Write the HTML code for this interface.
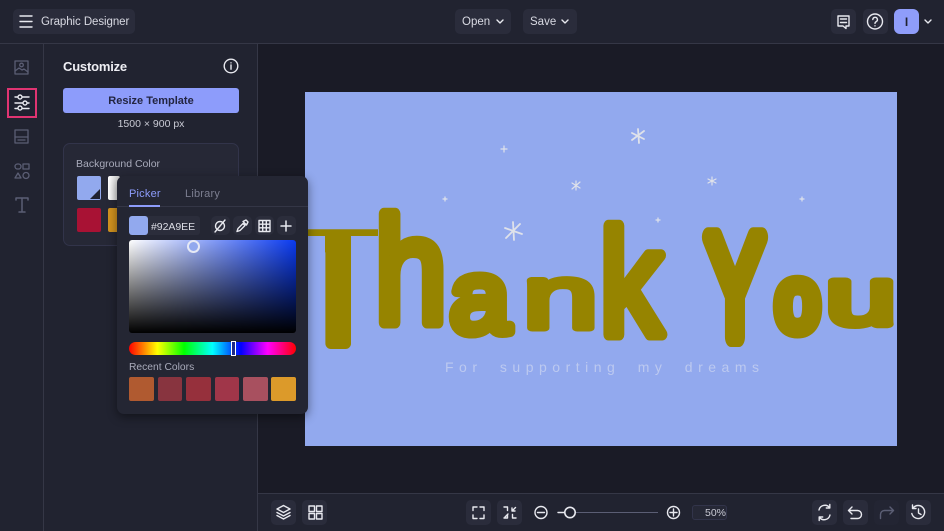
<!DOCTYPE html>
<html><head><meta charset="utf-8"><style>
html,body{margin:0;padding:0;width:944px;height:531px;overflow:hidden;background:#1a1b26;font-family:"Liberation Sans",sans-serif}
.a{position:absolute}
.btn{position:absolute;background:#2a2c3b;border-radius:5px}
.t{position:absolute;white-space:nowrap}
svg{position:absolute;overflow:visible}
.i{fill:none;stroke:#e8e9ef;stroke-width:1.4;stroke-linecap:round;stroke-linejoin:round}
.d{fill:none;stroke:#5b5e74;stroke-width:1.3;stroke-linecap:round;stroke-linejoin:round}
</style></head><body>
<div class="a" style="left:0;top:0;width:944px;height:43px;background:#212330;border-bottom:1px solid #353746"></div>
<div class="a" style="left:0;top:44px;width:43px;height:487px;background:#212330;border-right:1px solid #353746"></div>
<div class="a" style="left:44px;top:44px;width:213px;height:487px;background:#212330;border-right:1px solid #353746"></div>
<div class="a" style="left:258px;top:493px;width:686px;height:38px;background:#212330;border-top:1px solid #353746;box-sizing:border-box"></div>

<div class="btn" style="left:13px;top:9px;width:122px;height:25px"></div>
<svg style="left:0;top:0" width="40" height="44" class="i"><path d="M20 16h12M20 21.500h12M20 27h12"/></svg>
<div class="t" style="left:41px;top:16px;font-size:11.500px;color:#d8d9e2;letter-spacing:-.08px">Graphic Designer</div>

<div class="btn" style="left:455px;top:9px;width:56px;height:25px"></div>
<div class="t" style="left:462px;top:16px;font-size:11.500px;color:#d8d9e2">Open</div>
<div class="btn" style="left:523px;top:9px;width:54px;height:25px"></div>
<svg style="left:0;top:0" width="600" height="44" class="i"><path d="M497 20l3 3 3-3M562 20l3 3 3-3"/></svg>
<div class="t" style="left:530px;top:16px;font-size:11.500px;color:#d8d9e2">Save</div>

<div class="btn" style="left:831px;top:9px;width:25px;height:25px"></div>
<div class="btn" style="left:863px;top:9px;width:25px;height:25px"></div>
<div class="a" style="left:894px;top:9px;width:25px;height:25px;background:#8f9dfa;border-radius:6px"></div>
<div class="t" style="left:903px;top:15px;font-size:12px;font-weight:bold;color:#1f2130;width:7px;text-align:center">I</div>
<svg style="left:0;top:0" width="944" height="44" class="i">
<path d="M838 16h11v10h-3v2.500l-3-2.500h-5zM840.500 19h6M840.500 22.500h6"/>
<circle cx="875" cy="21.500" r="7.500"/><path d="M872.800 19.500a2.300 2.300 0 1 1 3.300 2.200c-.8.400-1.100.9-1.100 1.700"/><path d="M875 25.800v.1"/>
<path d="M925 20l3 3 3-3"/>
</svg>

<svg style="left:0;top:44px" width="44" height="180" class="d">
<rect x="15" y="17" width="13" height="13"/><circle cx="21.500" cy="21" r="1.800"/><path d="M15 27l4-3 3 2 2-1 4 3"/>
<rect x="15" y="86" width="13" height="13"/><path d="M15 93h13M18 96h7"/>
<rect x="15" y="120" width="6" height="5" rx="2.500"/><rect x="23" y="120" width="6" height="5"/><path d="M18 129l3 5h-6z"/><circle cx="26" cy="131.500" r="3"/>
<path d="M16 156v-2h12v2M22 154v14M19 168h6" stroke-width="1.500"/>
</svg>
<div class="a" style="left:7px;top:88px;width:30px;height:30px;border:2px solid #e03472;box-sizing:border-box;background:#1f2130"></div>
<svg style="left:0;top:0" width="44" height="120" class="i">
<path d="M15 97h14M15 103h14M15 108.500h14"/>
<circle cx="20" cy="97" r="2" fill="#1f2130"/><circle cx="25" cy="103" r="2" fill="#1f2130"/><circle cx="20" cy="108" r="2" fill="#1f2130"/>
</svg>

<div class="t" style="left:63px;top:59px;font-size:13px;font-weight:bold;color:#eeeef3;letter-spacing:-.2px">Customize</div>
<svg style="left:0;top:0" width="260" height="90" class="i"><circle cx="231" cy="66" r="6.800"/><path d="M231 65v4.200M231 62.800v.1"/></svg>
<div class="a" style="left:63px;top:88px;width:176px;height:25px;background:#8d9cfb;border-radius:3px"></div>
<div class="t" style="left:63px;top:95px;width:176px;text-align:center;font-size:11px;font-weight:bold;color:#232541">Resize Template</div>
<div class="t" style="left:63px;top:117.500px;width:176px;text-align:center;font-size:10.500px;color:#c9cad4">1500 × 900 px</div>

<div class="a" style="left:63px;top:143px;width:176px;height:103px;background:#262836;border:1px solid #32344a;border-radius:7px;box-sizing:border-box"></div>
<div class="t" style="left:76px;top:157.500px;font-size:10.500px;color:#a9abbb">Background Color</div>
<div class="a" style="left:77px;top:176px;width:24px;height:24px;background:#92a9ee;border-radius:2px"></div>
<svg style="left:0;top:0" width="110" height="210"><path d="M100 189v10h-10z" fill="#1f2130"/></svg>
<div class="a" style="left:108px;top:176px;width:12px;height:24px;background:linear-gradient(90deg,#fff,#ccc);border-radius:2px"></div>
<div class="a" style="left:77px;top:208px;width:24px;height:24px;background:#a81234;border-radius:2px"></div>
<div class="a" style="left:108px;top:208px;width:12px;height:24px;background:#d0921f;border-radius:2px"></div>

<!-- canvas -->
<div class="a" style="left:305px;top:92px;width:592px;height:354px;background:#92a9ee;overflow:hidden"></div>
<svg style="left:0;top:0" width="944" height="531">
<defs>
<clipPath id="c"><rect x="305" y="92" width="592" height="354"/></clipPath>
<clipPath id="tc"><rect x="305" y="220" width="73" height="16"/><rect x="325" y="236" width="26" height="120"/></clipPath>
</defs>
<g stroke="#dfe2ea" stroke-linecap="round" fill="none">
<g stroke-width="1.800"><path d="M638 129l1 14M632 133l12 6M644 131l-12 9"/></g>
<g stroke-width="1.800"><path d="M513 222l1 18M505 228l17 6M520 224l-14 14"/></g>
<g stroke-width="1.200"><path d="M576 181v9M572 183l8 5M580 182l-8 7"/><path d="M712 177v8M708 179l8 4M716 179l-8 4"/><path d="M504 146v6M501 149h6"/><path d="M445 197v4M443 199h4M802 197v4M800 199h4M658 218v4M656 220h4"/></g>
</g>
<g clip-path="url(#c)" fill="#968400" stroke="#968400" stroke-linejoin="round" font-family="Liberation Sans"><g clip-path="url(#tc)"><text transform="translate(290,343.500)" font-size="158" stroke-width="11">T</text></g><text transform="translate(375,322.500) scale(.86,1)" font-size="150" stroke-width="12">h</text><text transform="translate(450,332) scale(1.050,1)" font-size="102" stroke-width="11">a</text><text transform="translate(523,328) scale(1.500,1)" font-size="90" stroke-width="7">n</text><text transform="translate(600,334.500) scale(.83,1)" font-size="150" stroke-width="12">k</text><text transform="translate(690,337)" font-size="100" stroke="none"> </text><text transform="translate(706,337) scale(.6,1)" font-size="145" stroke-width="20">Y</text><text transform="translate(776,330) scale(.87,1)" font-size="89" stroke-width="15">o</text><text transform="translate(826,324) scale(1.550,1)" font-size="81" stroke-width="8">u</text></g>
<text x="445" y="372" textLength="314" font-family="Liberation Sans" font-size="14" fill="#bcc9f0" word-spacing="8">For supporting my dreams</text>
</svg>

<!-- picker -->
<div class="a" style="left:117px;top:176px;width:191px;height:238px;background:#242633;border-radius:7px;box-shadow:0 3px 10px rgba(0,0,0,.45)"></div>
<div class="t" style="left:129px;top:188px;font-size:11px;color:#8d9cfb;letter-spacing:.2px">Picker</div>
<div class="t" style="left:185px;top:188px;font-size:11px;color:#7c7e90;letter-spacing:.2px">Library</div>
<div class="a" style="left:117px;top:206px;width:191px;height:1px;background:#343646"></div>
<div class="a" style="left:129px;top:205px;width:31px;height:2px;background:#8d9cfb"></div>
<div class="a" style="left:129px;top:216px;width:71px;height:19px;background:#2b2d3b;border-radius:3px"></div>
<div class="a" style="left:129px;top:216px;width:19px;height:19px;background:#92a9ee;border-radius:3px"></div>
<div class="t" style="left:151px;top:221px;font-size:10.500px;color:#dcdde5;letter-spacing:-.05px">#92A9EE</div>
<div class="btn" style="left:211px;top:216px;width:19px;height:19px;background:#2b2d3b"></div>
<div class="btn" style="left:233px;top:216px;width:19px;height:19px;background:#2b2d3b"></div>
<div class="btn" style="left:255px;top:216px;width:19px;height:19px;background:#2b2d3b"></div>
<div class="btn" style="left:277px;top:216px;width:19px;height:19px;background:#2b2d3b"></div>
<svg style="left:0;top:0" width="310" height="240" class="i" stroke-width="1.200">
<circle cx="220" cy="226" r="4.500"/><path d="M215 232l10-12"/>
<path d="M237 231.500l1-3 5-5 2 2-5 5zM243 221.500l3-1.500 2 2-1.500 3z"/>
<path d="M259 220.500h11v11h-11zM259 224.200h11M259 227.800h11M262.700 220.500v11M266.300 220.500v11"/>
<path d="M281 226h10M286 221v10" stroke-width="1.500"/>
</svg>
<div class="a" style="left:129px;top:240px;width:167px;height:93px;border-radius:3px;background:linear-gradient(to bottom,rgba(0,0,0,0),#000),linear-gradient(to right,#fff,#0a3af0)"></div>
<div class="a" style="left:187px;top:240px;width:13px;height:13px;border:2px solid #e6e9f5;border-radius:50%;background:#92a9ee;box-sizing:border-box"></div>
<div class="a" style="left:129px;top:342px;width:167px;height:13px;border-radius:7px;background:linear-gradient(to right,#f00 0%,#ff0 17%,#0f0 33%,#0ff 50%,#00f 67%,#f0f 83%,#f00 100%)"></div>
<div class="a" style="left:231px;top:341px;width:5px;height:15px;background:#1d2a8a;border:1.500px solid #fff;box-sizing:border-box"></div>
<div class="t" style="left:129px;top:362px;font-size:10.300px;color:#a9abbb">Recent Colors</div>
<div class="a" style="left:129px;top:377px;width:24.500px;height:24px;background:#b05a30;border-radius:2px"></div>
<div class="a" style="left:157.500px;top:377px;width:24.500px;height:24px;background:#88343f;border-radius:2px"></div>
<div class="a" style="left:186px;top:377px;width:24.500px;height:24px;background:#96303c;border-radius:2px"></div>
<div class="a" style="left:214.500px;top:377px;width:24.500px;height:24px;background:#a03649;border-radius:2px"></div>
<div class="a" style="left:243px;top:377px;width:24.500px;height:24px;background:#a8505f;border-radius:2px"></div>
<div class="a" style="left:271px;top:377px;width:24.500px;height:24px;background:#dc9a2a;border-radius:2px"></div>

<!-- bottom bar -->
<div class="btn" style="left:271px;top:500px;width:25px;height:25px"></div>
<div class="btn" style="left:302px;top:500px;width:25px;height:25px"></div>
<div class="btn" style="left:466px;top:500px;width:25px;height:25px"></div>
<div class="btn" style="left:497px;top:500px;width:25px;height:25px"></div>
<div class="btn" style="left:812px;top:500px;width:25px;height:25px"></div>
<div class="btn" style="left:843px;top:500px;width:25px;height:25px"></div>
<div class="btn" style="left:874px;top:500px;width:25px;height:25px;background:#232533"></div>
<div class="btn" style="left:906px;top:500px;width:25px;height:25px"></div>
<div class="a" style="left:692px;top:505px;width:35px;height:15px;background:#262836;border:1px solid #32344a;border-radius:3px;box-sizing:border-box"></div>
<div class="t" style="left:705px;top:507px;font-size:10.500px;color:#c9cad4">50%</div>
<div class="a" style="left:558px;top:512px;width:100px;height:1px;background:#5b5e74"></div>
<svg style="left:0;top:0" width="944" height="531" class="i">
<path d="M283.500 506l6.500 3.500-6.500 3.500-6.500-3.500zM277 513l6.500 3.500 6.500-3.500M277 516l6.500 3.500 6.500-3.500" transform="translate(0 -.5)"/>
<path d="M309 506h5.500v5.500H309zM316.500 506h5.500v5.500h-5.500zM309 513.500h5.500v5.500H309zM316.500 513.500h5.500v5.500h-5.500z"/>
<path d="M473 510.500V507h4M480 507h4v3.500M484 515v3.500h-4M477 518.500h-4V515"/>
<path d="M504 507h3.500v3.500M504 518h3.500v-3.500M516 518h-3.500v-3.500M512 511l3.500-3.500M512 511h3M512 511v-3M508 514l-3 3"/>
<circle cx="541" cy="512.500" r="6"/><path d="M537.500 512.500h7"/>
<path d="M558 512.500h7"/><circle cx="570" cy="512.500" r="5.200" fill="#212330" stroke-width="1.600"/>
<circle cx="673.500" cy="512.500" r="6"/><path d="M670 512.500h7M673.500 509v7"/>
<path d="M819 510a6 6 0 0 1 10.500-2.500M830 515a6 6 0 0 1-10.500 2.500M829.800 504.500v3.500h-3.500M819.200 520.500V517h3.500"/>
<path d="M852 507l-3.500 3.500 3.500 3.500M848.500 510.500h9a4 4 0 0 1 4 4v0a4 4 0 0 1-4 4H851"/>
<g stroke="#5b5e74"><path d="M890 507l3.500 3.500-3.500 3.500M893.500 510.500h-9a4 4 0 0 0-4 4v4"/></g>
<path d="M913 508a6.500 6.500 0 1 1-1.200 5.500M912.500 505v3.500h3.500M918.500 509v4l2.500 1.500"/>
</svg>
</body></html>
